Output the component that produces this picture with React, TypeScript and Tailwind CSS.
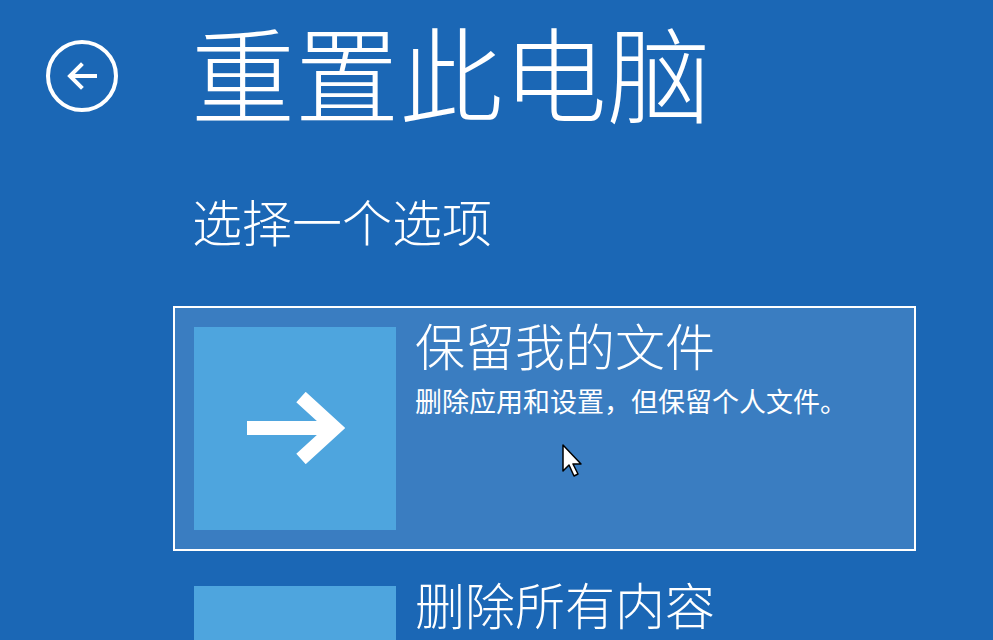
import React from "react";

const cjk = { fontFamily: '"Noto Sans CJK SC", "Noto Sans", sans-serif' };

function BackButton() {
    return (
        <button className="mt-[31px] w-[72px] h-[72px] rounded-full border-[4px] border-white flex items-center justify-center shrink-0">
            <svg width="40" height="40" viewBox="0 0 40 40" fill="none">
                <path d="M33 20H9M19 9L8 20l11 11" stroke="white" strokeWidth="4" strokeLinecap="square" />
            </svg>
        </button>
    );
}

function ArrowTile({ showArrow }: { showArrow: boolean }) {
    return (
        <div className="w-[202px] h-[203px] bg-[#4ea5de] shrink-0 flex items-center justify-center">
            {showArrow && (
                <svg width="100" height="72" viewBox="0 0 100 72" fill="none">
                    <path d="M2 36H88" stroke="white" strokeWidth="14" />
                    <path d="M56 5L90 36L56 67" stroke="white" strokeWidth="14" />
                </svg>
            )}
        </div>
    );
}

function Option({ title, desc, selected }: { title: string; desc?: string; selected?: boolean }) {
    return (
        <div
            className={
                selected
                    ? "relative w-[743px] px-[19px] pb-[19px] pt-[11px] border-2 border-white bg-[#3a7dc1] flex items-start gap-[19px]"
                    : "relative w-[743px] px-[19px] pb-[19px] pt-[11px] border-2 border-transparent flex items-start gap-[19px]"
            }
        >
            <div className="pt-[8px]">
                <ArrowTile showArrow={!!selected} />
            </div>
            <div className="flex flex-col text-white">
                <div className="text-[50px] leading-none font-light">{title}</div>
                {desc && <div className="text-[27px] leading-none mt-[18px]">{desc}</div>}
            </div>
            {selected && (
                <svg className="absolute left-[387px] top-[136px]" width="22" height="34" viewBox="0 0 22 34">
                    <path d="M1 1V27L7 21L12 32L16 30L11 20H19Z" fill="white" stroke="black" strokeWidth="1.5" strokeLinejoin="round" />
                </svg>
            )}
        </div>
    );
}

export default function App() {
    return (
        <div className="w-[993px] h-[640px] overflow-hidden bg-[#1b67b5] text-white" style={cjk}>
            <div className="flex pt-[9px] pl-[46px]">
                <BackButton />
                <div className="ml-[55px] flex flex-col">
                    <div className="pl-[18px]">
                        <h1 className="w-fit whitespace-nowrap text-[104px] leading-[1.2] font-light">重置此电脑</h1>
                    </div>
                    <div className="text-[50px] leading-none font-light mt-[61px] pl-[19px]">选择一个选项</div>
                    <div className="flex flex-col gap-[14px] mt-[61px]">
                        <Option selected title="保留我的文件" desc="删除应用和设置，但保留个人文件。" />
                        <Option title="删除所有内容" />
                    </div>
                </div>
            </div>
        </div>
    );
}
